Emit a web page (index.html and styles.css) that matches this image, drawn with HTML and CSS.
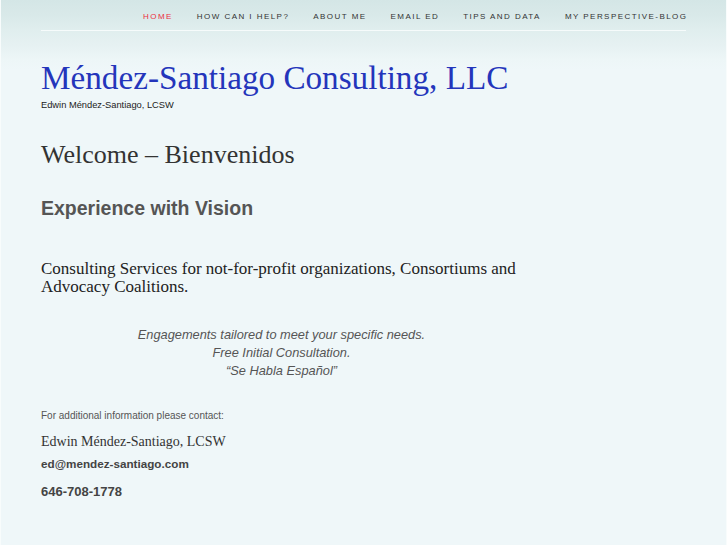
FILE: index.html
```html
<!DOCTYPE html>
<html>
<head>
<meta charset="utf-8">
<link rel="stylesheet" href="styles.css">
</head>
<body>
<div class="page">
  <header class="top">
    <nav class="nav">
      <a class="nav-item active">HOME</a>
      <a class="nav-item">HOW CAN I HELP?</a>
      <a class="nav-item">ABOUT ME</a>
      <a class="nav-item">EMAIL ED</a>
      <a class="nav-item">TIPS AND DATA</a>
      <a class="nav-item last">MY PERSPECTIVE-BLOG</a>
    </nav>
    <div class="rule"></div>
  </header>
  <main class="content">
    <h1 class="site-title">Méndez-Santiago Consulting, LLC</h1>
    <p class="tagline">Edwin Méndez-Santiago, LCSW</p>
    <h2 class="welcome">Welcome – Bienvenidos</h2>
    <h3 class="vision">Experience with Vision</h3>
    <p class="services">Consulting Services for not-for-profit organizations, Consortiums and Advocacy Coalitions.</p>
    <p class="offer">Engagements tailored to meet your specific needs.<br>Free Initial Consultation.<br>“Se Habla Español”</p>
    <p class="contact-intro">For additional information please contact:</p>
    <p class="contact-name">Edwin Méndez-Santiago, LCSW</p>
    <p class="contact-email">ed@mendez-santiago.com</p>
    <p class="contact-phone">646-708-1778</p>
  </main>
</div>
</body>
</html>
```
FILE: styles.css
```css
html, body {
  margin: 0;
  padding: 0;
}
body {
  background: #eff7f9;
  font-family: "Liberation Sans", Arial, sans-serif;
  width: 727px;
  height: 545px;
  overflow: hidden;
}
.page {
  box-sizing: border-box;
  height: 545px;
  border-left: 1px solid #f8fcfc;
  border-right: 1px solid #f8fcfc;
  background: linear-gradient(to bottom, #d4e6e6 0px, #d9e9e9 15px, #e0eeee 30px, #e6f1f2 45px, #edf6f7 60px, #eff7f9 70px, #eff7f9 100%);
}
.top {
  padding: 0 40px 0 40px;
}
.nav {
  display: flex;
  justify-content: flex-end;
  gap: 24px;
  height: 30px;
  align-items: center;
  padding-top: 2px;
  box-sizing: border-box;
}
.nav-item {
  font-size: 8px;
  letter-spacing: 1.45px;
  color: #333;
  text-decoration: none;
}
.nav-item.active {
  color: #ec2f3d;
}
.nav-item.last {
  margin-right: -1.45px;
}
.rule {
  height: 1px;
  background: #f6fbfb;
}
.content {
  padding: 0 0 0 40px;
  width: 481px;
}
.site-title {
  margin: 27px 0 0 0;
  font-family: "Liberation Serif", "Times New Roman", serif;
  font-weight: normal;
  font-size: 33.2px;
  line-height: 40px;
  color: #2435bb;
  white-space: nowrap;
}
.tagline {
  margin: 0;
  font-size: 9.3px;
  line-height: 14px;
  color: #222;
}
.welcome {
  margin: 28px 0 0 0;
  font-family: "Liberation Serif", "Times New Roman", serif;
  font-weight: normal;
  font-size: 26px;
  line-height: 30px;
  color: #333;
}
.vision {
  margin: 26px 0 0 0;
  font-size: 19.5px;
  line-height: 24px;
  font-weight: bold;
  color: #555;
}
.services {
  margin: 40px 0 0 0;
  font-family: "Liberation Serif", "Times New Roman", serif;
  font-size: 17px;
  line-height: 17.5px;
  color: #222;
}
.offer {
  margin: 31px 0 0 0;
  text-align: center;
  font-style: italic;
  font-size: 12.8px;
  line-height: 18px;
  color: #555;
}
.contact-intro {
  margin: 29px 0 0 0;
  font-size: 10px;
  line-height: 14px;
  color: #555;
}
.contact-name {
  margin: 10px 0 0 0;
  font-family: "Liberation Serif", "Times New Roman", serif;
  font-size: 14px;
  line-height: 18px;
  color: #333;
}
.contact-email {
  margin: 5px 0 0 0;
  font-size: 11.7px;
  line-height: 16px;
  font-weight: bold;
  color: #444;
}
.contact-phone {
  margin: 12px 0 0 0;
  font-size: 13px;
  line-height: 16px;
  font-weight: bold;
  color: #444;
}
```
